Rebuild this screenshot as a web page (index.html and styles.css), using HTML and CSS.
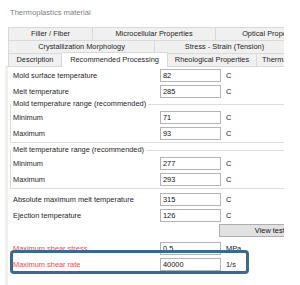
FILE: index.html
```html
<!DOCTYPE html>
<html lang="en">
<head>
    <meta charset="UTF-8">
    <meta name="viewport" content="width=device-width, initial-scale=1.0">
    <title>Thermoplastics material</title>
    <link rel="stylesheet" href="styles.css">
</head>
<body>
    <div class="title">Thermoplastics material</div>

    <div class="tab-control">
        <div class="tab-row">
            <div class="tab tab-filler">Filler / Fiber</div>
            <div class="tab tab-micro">Microcellular Properties</div>
            <div class="tab tab-optical">Optical Properties</div>
        </div>
        <div class="tab-row">
            <div class="tab tab-crystal">Crystallization Morphology</div>
            <div class="tab tab-stress">Stress - Strain (Tension)</div>
        </div>
        <div class="tab-row">
            <div class="tab tab-desc">Description</div>
            <div class="tab tab-recommended active">Recommended Processing</div>
            <div class="tab tab-rheo">Rheological Properties</div>
            <div class="tab tab-thermal">Thermal Properties</div>
        </div>

        <div class="pane">
            <div class="row">
                <label>Mold surface temperature</label>
                <input type="text" value="82">
                <span class="unit">C</span>
            </div>
            <div class="row">
                <label>Melt temperature</label>
                <input type="text" value="285">
                <span class="unit">C</span>
            </div>

            <fieldset class="group">
                <legend>Mold temperature range (recommended)</legend>
                <div class="row">
                    <label>Minimum</label>
                    <input type="text" value="71">
                    <span class="unit">C</span>
                </div>
                <div class="row">
                    <label>Maximum</label>
                    <input type="text" value="93">
                    <span class="unit">C</span>
                </div>
            </fieldset>

            <fieldset class="group group-melt">
                <legend>Melt temperature range (recommended)</legend>
                <div class="row">
                    <label>Minimum</label>
                    <input type="text" value="277">
                    <span class="unit">C</span>
                </div>
                <div class="row">
                    <label>Maximum</label>
                    <input type="text" value="293">
                    <span class="unit">C</span>
                </div>
            </fieldset>

            <div class="row row-abs">
                <label>Absolute maximum melt temperature</label>
                <input type="text" value="315">
                <span class="unit">C</span>
            </div>
            <div class="row">
                <label>Ejection temperature</label>
                <input type="text" value="126">
                <span class="unit">C</span>
            </div>

            <div class="button-row">
                <button>View test data</button>
            </div>

            <div class="row row-shear warn">
                <label>Maximum shear stress</label>
                <input type="text" value="0.5">
                <span class="unit">MPa</span>
            </div>
            <div class="row warn">
                <label>Maximum shear rate</label>
                <input type="text" value="40000">
                <span class="unit">1/s</span>
            </div>
        </div>
    </div>

    <!-- khung danh dau dong dang xem -->
    <div class="highlight"></div>
</body>
</html>
```

FILE: styles.css
```css
* {
    margin: 0;
    padding: 0;
    box-sizing: border-box;
}

body {
    position: relative;
    width: 300px;
    height: 285px;
    overflow: hidden;
    background-color: #fff;
    color: #1e1e1e;
    font-family: "Liberation Sans", Arial, sans-serif;
    font-size: 7.4px;
}

.title {
    height: 27px;
    line-height: 25px;
    padding-left: 10px;
    color: #808080;
    font-size: 7.6px;
}

.tab-control {
    width: 279px;
    height: 258px;
    margin-left: 5px;
    overflow: hidden;
}

/* cac hang tab */
.tab-row {
    display: flex;
    height: 13px;
    margin-left: 3px;
    border-top: 1px solid #d9d9d9;
    border-left: 1px solid #d9d9d9;
}

.tab {
    flex: none;
    height: 12px;
    line-height: 12px;
    text-align: center;
    white-space: nowrap;
    overflow: hidden;
    background-color: #f0f0f0;
    border-right: 1px solid #d9d9d9;
}

.tab-filler { width: 84px; }
.tab-micro { width: 123px; }
.tab-optical { width: 112px; }
.tab-crystal { width: 146px; }
.tab-stress { width: 140px; }
.tab-desc { width: 53px; }
.tab-recommended { width: 106px; }
.tab-rheo { width: 89px; }
.tab-thermal { width: 74px; }

.tab.active {
    position: relative;
    z-index: 1;
    height: 15px;
    margin-top: -2px;
    line-height: 14px;
    background-color: #fff;
    border-top: 1px solid #d9d9d9;
}

.pane {
    height: 220px;
    padding-left: 2px;
    border-top: 1px solid #d9d9d9;
    border-left: 3px solid #f0f0f0;
}

.row {
    display: grid;
    grid-template-columns: 145px 61px auto;
    align-items: center;
    column-gap: 5px;
    height: 16px;
}

.row label {
    padding-left: 3px;
    white-space: nowrap;
}

.row input {
    width: 61px;
    height: 13px;
    padding: 0 2px;
    border: 1px solid #b4b4b4;
    font-family: inherit;
    font-size: 7.4px;
    color: #111;
    outline: none;
}

.unit {
    color: #222;
}

/* nhom gia tri */
.group {
    width: 290px;
    min-width: 0;
    padding: 0 0 1px 0;
    border: 1px solid #dcdcdc;
}

.group legend {
    margin-left: 0;
    padding: 0 2px;
    line-height: 10px;
}

.group .row {
    grid-template-columns: 144px 61px auto;
}

.group .row label {
    padding-left: 2px;
}

.group-melt {
    margin-top: 2px;
}

.row-abs {
    margin-top: 2px;
}

.button-row {
    height: 13px;
    margin-top: 1px;
}

.button-row button {
    width: 118px;
    height: 13px;
    margin-left: 209px;
    background-color: #e1e1e1;
    border: 1px solid #adadad;
    font-family: inherit;
    font-size: 7.4px;
    color: #111;
    white-space: nowrap;
}

.row-shear {
    margin-top: 3px;
}

.warn label {
    color: #f2474a;
}

.highlight {
    position: absolute;
    left: 10px;
    top: 250px;
    width: 239px;
    height: 24px;
    border: 3px solid #3f6890;
    border-radius: 4px;
}
```
